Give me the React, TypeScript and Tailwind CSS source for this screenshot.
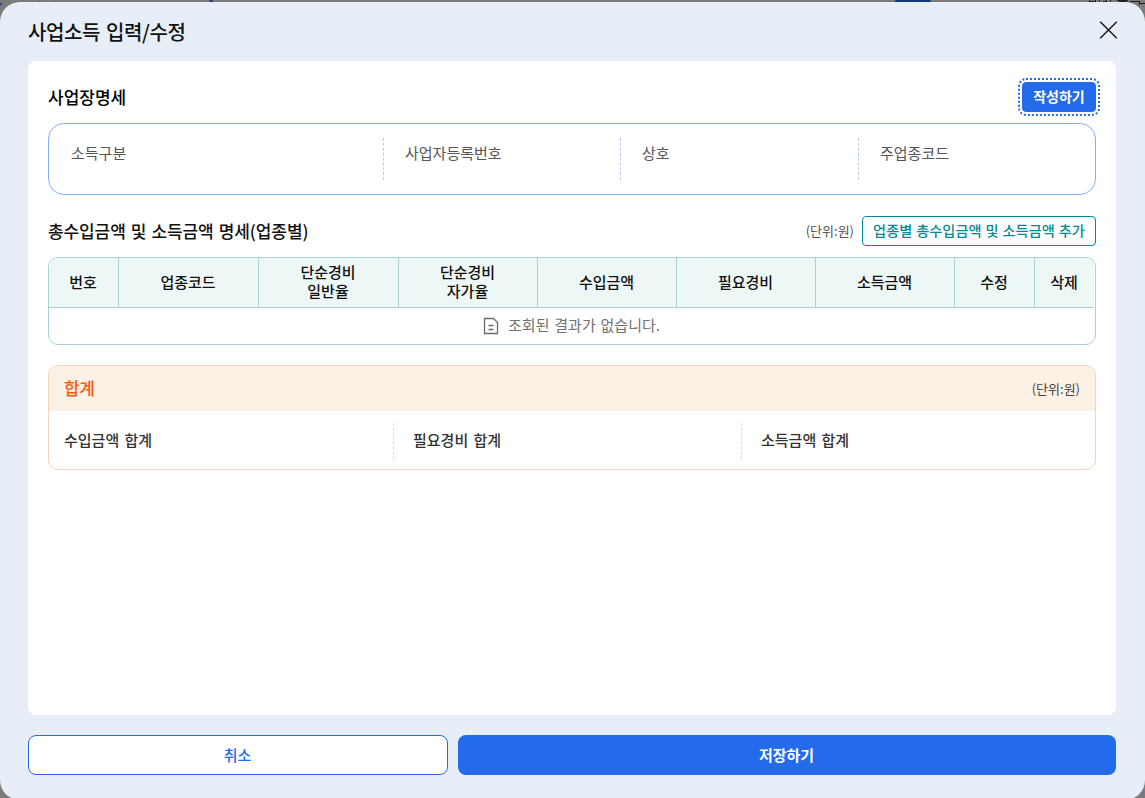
import React from "react";

const columns: { lines: string[] }[] = [
  { lines: ["번호"] },
  { lines: ["업종코드"] },
  { lines: ["단순경비", "일반율"] },
  { lines: ["단순경비", "자가율"] },
  { lines: ["수입금액"] },
  { lines: ["필요경비"] },
  { lines: ["소득금액"] },
  { lines: ["수정"] },
  { lines: ["삭제"] },
];

function Backdrop() {
  return (
    <svg className="absolute left-0 top-0" width="1145" height="24" viewBox="0 0 1145 24" aria-hidden="true">
      <path d="M0 3.5L1.5 4.5" stroke="#12398a" strokeWidth="2" />
      <path d="M20.5 0V2M39.500 0V2M45.500 0V2M54.500 0V2" stroke="#737373" />
      <path d="M209.500 0L213 2" stroke="#12398a" strokeWidth="2" />
      <path d="M896 0H930L931 2H894Z" fill="#12357c" />
      <path d="M1089.500 0V2M1095.500 0V2M1099.500 0V2M1106.500 0V2M1110.500 0V2M1089 1.500H1096M1103 1.500H1107M1117 .5H1128M1119 1.500H1127M1130 1.500H1139M1139.500 1V5M1140 3.500H1145" stroke="#222" />
    </svg>
  );
}

function BusinessInfo() {
  return (
    <div className="mt-[7px] grid h-[72px] grid-cols-[335px_237px_238px_1fr] rounded-[16px] border border-[#84adf4] py-[14px] text-[15px] leading-[30px] text-[#555]">
      <div className="border-r border-dashed border-[#b9cbed] pl-[22px]">소득구분</div>
      <div className="border-r border-dashed border-[#b9cbed] pl-[21px]">사업자등록번호</div>
      <div className="border-r border-dashed border-[#b9cbed] pl-[21px]">상호</div>
      <div className="pl-[21px]">주업종코드</div>
    </div>
  );
}

function IncomeTable() {
  return (
    <div className="mt-[11px] h-[88px] overflow-hidden rounded-[10px] border border-[#a9d1d6]">
      <div className="mr-px grid h-[50px] grid-cols-[70px_140px_140px_139px_139px_139px_139px_80px_1fr] border-b border-[#a9d1d6] bg-[#edf7f6] text-[15px] font-medium leading-[19px] text-[#111]">
        {columns.map((c, i) => (
          <div key={i} className="flex flex-col items-center justify-center border-r border-[#a9d1d6] pb-[3px] pr-px last:border-r-0">
            {c.lines.map((l) => (
              <span key={l}>{l}</span>
            ))}
          </div>
        ))}
      </div>
      <div className="flex h-[36px] items-center justify-center gap-[9px] pb-0.5 pr-px text-[15px] text-[#717171] [word-spacing:1.5px]">
        <svg width="16" height="18" viewBox="0 0 16 18" fill="none" stroke="#6b6b6b" strokeWidth="1.300" className="mt-0.5">
          <path d="M1.500 1.500H10.500L14.500 5.500V16.500H1.500Z M5.500 8.500H10.500 M5.500 12.500H10.500" />
        </svg>
        <span>조회된 결과가 없습니다.</span>
      </div>
    </div>
  );
}

function Totals() {
  return (
    <div className="mt-5 h-[105px] overflow-hidden rounded-[10px] border border-[#f0d5bb]">
      <div className="flex h-[45px] items-center justify-between bg-[#fdf0e4] px-[15px]">
        <span className="pb-0.5 text-[17px] font-medium tracking-[-0.3px] text-[#f75b0f]">합계</span>
        <span className="text-[13px] text-[#444]">(단위:원)</span>
      </div>
      <div className="mt-3 grid h-9 grid-cols-[345px_348px_1fr] text-[15px] font-medium leading-[34px] text-[#333] [word-spacing:1.8px]">
        <div className="border-r border-dashed border-[#f3d6cb] pl-[15px]">수입금액 합계</div>
        <div className="border-r border-dashed border-[#f3d6cb] pl-[19px]">필요경비 합계</div>
        <div className="pl-[19px]">소득금액 합계</div>
      </div>
    </div>
  );
}

export default function App() {
  return (
    <div className="relative h-[798px] w-[1145px] overflow-hidden bg-[#7b7b7b] pt-[2px] font-['Noto_Sans_CJK_KR','Noto_Sans_KR',sans-serif]">
      <Backdrop />
      <div className="relative flex h-[798px] flex-col rounded-[20px] bg-[#e7eef8] px-7">
        <header className="flex h-[59px] items-center justify-between">
          <h1 className="text-[20px] font-medium tracking-[-0.4px] text-[#111] [word-spacing:2px]">사업소득 입력/수정</h1>
          <button aria-label="닫기" className="mr-[-1px] pb-[3px]">
            <svg width="19" height="18" viewBox="0 0 19 18" stroke="#222" strokeWidth="1.600" fill="none">
              <path d="M1.200 .7L17.800 17.300M17.800 .7L1.200 17.300" />
            </svg>
          </button>
        </header>
        <main className="h-[654px] w-[1088px] rounded-[8px] bg-white px-5 pt-5">
          <div className="flex h-[35px] items-start justify-between">
            <h2 className="text-[17px] font-medium leading-[32px] text-black">사업장명세</h2>
            <button className="mr-[-1px] h-[32px] w-[76px] rounded-[5px] border border-white bg-[#246beb] bg-clip-padding text-[14px] font-bold leading-[28px] text-white outline-2 outline-dotted outline-offset-1 outline-[#246beb]">
              <span className="block pb-0.5">작성하기</span>
            </button>
          </div>
          <BusinessInfo />
          <div className="mt-[21px] flex h-[30px] items-center justify-between">
            <h2 className="text-[17px] font-medium tracking-[-0.1px] text-[#111] [word-spacing:1.4px]">총수입금액 및 소득금액 명세(업종별)</h2>
            <div className="flex items-center gap-2">
              <span className="text-[13px] text-[#555]">(단위:원)</span>
              <button className="h-[30px] w-[234px] whitespace-nowrap rounded-[4px] border border-[#058a93] bg-white text-[14.200px] font-medium leading-[26px] text-[#058a93] [word-spacing:0.8px]">
                <span className="block pb-0.5">업종별 총수입금액 및 소득금액 추가</span>
              </button>
            </div>
          </div>
          <IncomeTable />
          <Totals />
        </main>
        <footer className="mt-5 flex h-10 w-[1088px] gap-[10px] text-[15px]">
          <button className="w-[420px] rounded-[8px] border border-[#246beb] bg-white pr-px font-medium text-[#246beb]">취소</button>
          <button className="flex-1 rounded-[8px] bg-[#246beb] pr-px font-bold text-white">저장하기</button>
        </footer>
      </div>
    </div>
  );
}
